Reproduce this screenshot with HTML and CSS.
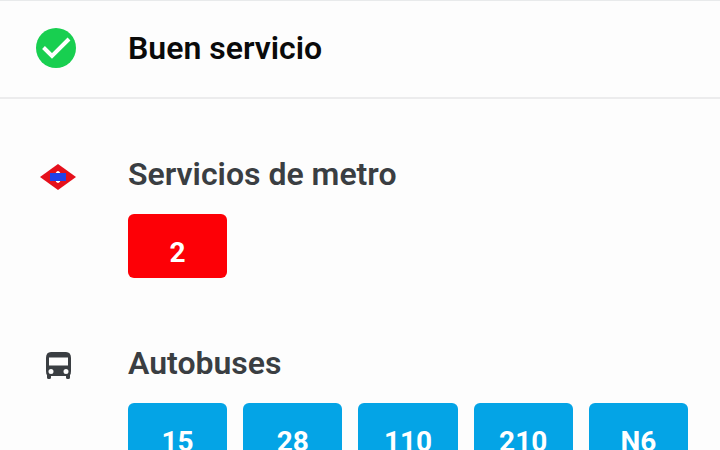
FILE: index.html
```html
<!DOCTYPE html>
<html lang="es">

<head>
    <meta charset="UTF-8">
    <meta name="viewport" content="width=device-width, initial-scale=1.0">
    <title>Estado del servicio</title>
    <link rel="stylesheet" href="styles.css">
</head>

<body>
    <header class="status">
        <svg class="icon" width="40" height="40" viewBox="0 0 40 40" aria-hidden="true">
            <circle cx="20" cy="20" r="20" fill="#18cf50"/>
            <path d="M7.5 19.5L16 28L33 11" fill="none" stroke="#fff" stroke-width="4"/>
        </svg>
        <h1 class="status-title">Buen servicio</h1>
    </header>

    <main>
        <section class="service">
            <svg class="icon" width="40" height="40" viewBox="0 0 40 40" aria-hidden="true">
                <path d="M4 21L22 8L40 21L22 34Z" fill="#e5101c"/>
                <ellipse cx="22" cy="21" rx="3" ry="6" fill="#fff"/>
                <rect x="14" y="17" width="16" height="8" fill="#2042ea"/>
            </svg>
            <div class="service-body">
                <h2 class="service-title">Servicios de metro</h2>
                <ul class="lines">
                    <li class="line metro">2</li>
                </ul>
            </div>
        </section>

        <section class="service">
            <svg class="icon" width="40" height="40" viewBox="0 0 40 40" aria-hidden="true">
                <path fill="#3a3e42" fill-rule="evenodd" d="M10 13Q10 7 15 7H30Q35 7 35 13V26Q35 29 34 30V32.500Q34 34 32.500 34H31.500Q30 34 30 32.500V31H15V32.500Q15 34 13.500 34H12.500Q11 34 11 32.500V30Q10 29 10 26ZM13 12.500V20.500H32V12.500ZM15 24A2.500 2.500 0 1 0 15 29A2.500 2.500 0 1 0 15 24ZM30 24A2.500 2.500 0 1 0 30 29A2.500 2.500 0 1 0 30 24Z"/>
            </svg>
            <div class="service-body">
                <h2 class="service-title">Autobuses</h2>
                <ul class="lines">
                    <li class="line bus">15</li>
                    <li class="line bus">28</li>
                    <li class="line bus">110</li>
                    <li class="line bus">210</li>
                    <li class="line bus">N6</li>
                </ul>
            </div>
        </section>
    </main>
</body>

</html>
```

FILE: styles.css
```css
body {
    margin: 0;
    background: #fdfdfd;
    font-family: Roboto, "Liberation Sans", sans-serif;
    color: #3a3e42;
}
h1, h2, ul {
    margin: 0;
    padding: 0;
}
.icon {
    flex: none;
}
.status {
    display: flex;
    align-items: center;
    gap: 52px;
    padding: 27px 32px 29px 36px;
    border-top: 1px solid #e8eaeb;
    border-bottom: 2px solid #ececed;
}
.status-title,
.service-title {
    font-size: 32px;
    line-height: 40px;
    font-weight: 600;
}
.status-title {
    color: #0a0a0a;
}
.service {
    display: flex;
    gap: 52px;
    padding: 55px 32px 65px 36px;
}
.service + .service {
    padding-top: 0;
}
.service .icon {
    margin-top: 2px;
}
.service-body {
    flex: 1;
}
/* Line badges, five to a row */
.lines {
    display: grid;
    grid-template-columns: repeat(5, 1fr);
    gap: 16px;
    margin-top: 20px;
    list-style: none;
}
.line {
    padding: 21px 0 7px;
    border-radius: 6px;
    color: #fff;
    font-size: 28px;
    line-height: 36px;
    font-weight: 700;
    text-align: center;
}
.metro {
    background: #fd0006;
}
.bus {
    background: #04a4e6;
}
```
